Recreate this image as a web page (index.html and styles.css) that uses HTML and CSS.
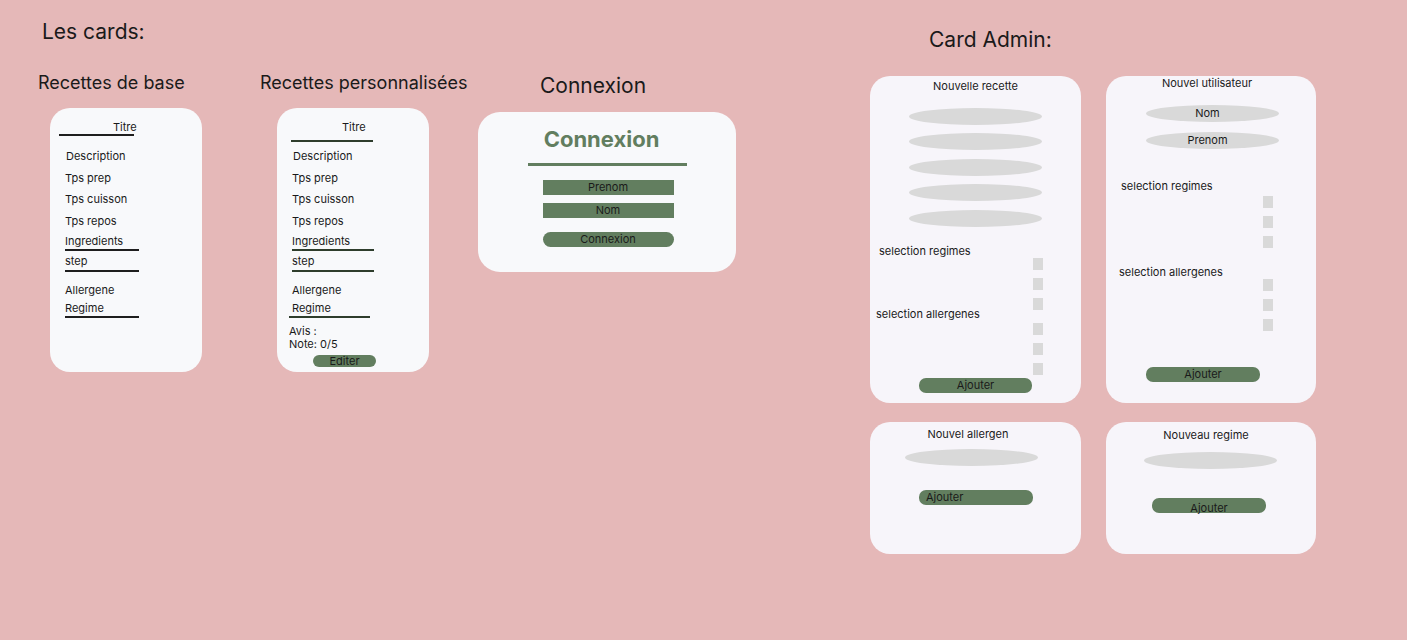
FILE: index.html
```html
<!DOCTYPE html>
<html lang="fr">

<head>
    <meta charset="UTF-8">
    <title>Les cards</title>
    <link rel="stylesheet" href="styles.css">
</head>

<body>

    <div class="board">

        <h1 class="board-title">Les cards:</h1>

        <!-- Recettes de base -->
        <section class="frame frame-base">
            <h2 class="frame-title">Recettes de base</h2>
            <div class="card recipe">
                <p class="titre">Titre</p>
                <div class="rule rule-titre"></div>
                <p class="field first">Description</p>
                <p class="field">Tps prep</p>
                <p class="field small">Tps cuisson</p>
                <p class="field">Tps repos</p>
                <p class="field ingr">Ingredients</p>
                <div class="rule"></div>
                <p class="field step">step</p>
                <div class="rule rule-step"></div>
                <p class="field allerg">Allergene</p>
                <p class="field regime">Regime</p>
                <div class="rule"></div>
            </div>
        </section>

        <!-- Recettes personnalisées -->
        <section class="frame frame-perso">
            <h2 class="frame-title">Recettes personnalisées</h2>
            <div class="card recipe perso">
                <p class="titre">Titre</p>
                <div class="rule rule-titre"></div>
                <p class="field first">Description</p>
                <p class="field">Tps prep</p>
                <p class="field small">Tps cuisson</p>
                <p class="field">Tps repos</p>
                <p class="field ingr">Ingredients</p>
                <div class="rule"></div>
                <p class="field step">step</p>
                <div class="rule rule-step"></div>
                <p class="field allerg">Allergene</p>
                <p class="field regime">Regime</p>
                <div class="rule rule-regime"></div>
                <p class="avis">Avis :</p>
                <p class="note">Note: 0/5</p>
                <div class="btn btn-editer">Editer</div>
            </div>
        </section>

        <!-- Connexion -->
        <section class="frame frame-login">
            <h2 class="frame-title big login-heading">Connexion</h2>
            <div class="card login">
                <h3 class="login-title">Connexion</h3>
                <div class="login-rule"></div>
                <div class="login-input first">Prenom</div>
                <div class="login-input">Nom</div>
                <div class="btn btn-login">Connexion</div>
            </div>
        </section>

        <!-- Card Admin -->
        <section class="frame frame-admin">
            <h2 class="frame-title big admin-title">Card Admin:</h2>
            <div class="admin-grid">

                <div class="card admin new-recipe">
                    <p class="admin-name">Nouvelle recette</p>
                    <div class="pills">
                        <div class="pill"></div>
                        <div class="pill"></div>
                        <div class="pill"></div>
                        <div class="pill"></div>
                        <div class="pill"></div>
                    </div>
                    <div class="selection">
                        <div class="labels">
                            <p class="label l-regimes">selection regimes</p>
                            <p class="label l-allergenes">selection allergenes</p>
                        </div>
                        <div class="checks">
                            <div class="sq"></div>
                            <div class="sq"></div>
                            <div class="sq"></div>
                            <div class="sq apart"></div>
                            <div class="sq"></div>
                            <div class="sq"></div>
                        </div>
                    </div>
                    <div class="btn btn-add">Ajouter</div>
                </div>

                <div class="card admin new-user">
                    <p class="admin-name">Nouvel utilisateur</p>
                    <div class="pills">
                        <div class="pill">Nom</div>
                        <div class="pill">Prenom</div>
                    </div>
                    <div class="selection">
                        <div class="labels">
                            <p class="label l-regimes">selection regimes</p>
                            <p class="label l-allergenes">selection allergenes</p>
                        </div>
                        <div class="checks">
                            <div class="sq"></div>
                            <div class="sq"></div>
                            <div class="sq"></div>
                            <div class="sq apart"></div>
                            <div class="sq"></div>
                            <div class="sq"></div>
                        </div>
                    </div>
                    <div class="btn btn-add">Ajouter</div>
                </div>

                <div class="card admin new-allergen">
                    <p class="admin-name">Nouvel allergen</p>
                    <div class="pills">
                        <div class="pill"></div>
                    </div>
                    <div class="btn btn-add">Ajouter</div>
                </div>

                <div class="card admin new-regime">
                    <p class="admin-name">Nouveau regime</p>
                    <div class="pills">
                        <div class="pill"></div>
                    </div>
                    <div class="btn btn-add">Ajouter</div>
                </div>

            </div>
        </section>

    </div>

</body>

</html>
```

FILE: styles.css
```css
body {
    margin: 0;
    background: #e5b8b8;
    color: #1a1a1a;
    font-family: Inter, "Noto Sans", sans-serif;
}

p,
h1,
h2,
h3 {
    margin: 0;
    font-weight: 400;
}

/* the whole page is a design board, frames sit where they were drawn */
.board {
    position: relative;
    width: 1407px;
    height: 640px;
    overflow: hidden;
}

.board-title {
    position: absolute;
    left: 42px;
    top: 19px;
    font-size: 21px;
    line-height: 26px;
}

.frame {
    position: absolute;
}

.frame-title {
    font-size: 18px;
    line-height: 20px;
    white-space: nowrap;
}

.frame-title.big {
    font-size: 21px;
    line-height: 24px;
}

.frame-base {
    left: 38px;
    top: 73px;
}

.frame-perso {
    left: 260px;
    top: 73px;
}

.frame-login {
    left: 478px;
    top: 74px;
}

.frame-admin {
    left: 870px;
    top: 28px;
}

.card {
    box-sizing: border-box;
    background: #f8f9fb;
    border-radius: 20px;
}

/* recipe cards */
.recipe {
    width: 152px;
    height: 264px;
    margin: 15px 0 0 12px;
    padding: 12px 0 0 15px;
}

.perso {
    margin-left: 17px;
}

.recipe p {
    font-size: 11px;
    line-height: 14px;
}

.recipe .titre {
    padding-left: 48px;
}

.perso .titre {
    padding-left: 50px;
}

.rule {
    width: 74px;
    height: 2px;
    margin-top: 1px;
    background: #1e1e1e;
}

.recipe .rule-titre {
    width: 75px;
    margin: 0 0 0 -6px;
}

.recipe .rule-step {
    margin-top: 2px;
}

.field {
    margin-top: 8px;
}

.field.first {
    margin-top: 13px;
    padding-left: 1px;
}

.field.small {
    margin-top: 7px;
}

.field.ingr {
    margin-top: 6px;
}

.field.step {
    margin-top: 3px;
}

.field.allerg {
    margin-top: 11px;
}

.field.regime {
    margin-top: 4px;
}

.perso .rule {
    width: 82px;
    background: #2e3d2c;
}

.perso .rule-titre {
    width: 82px;
    margin: 6px 0 0 -1px;
}

.perso .field.first {
    margin-top: 7px;
}

.perso .rule-regime {
    width: 81px;
    margin-left: -3px;
}

.recipe .avis {
    margin: 7px 0 0 -3px;
    line-height: 13px;
}

.recipe .note {
    margin-left: -3px;
    line-height: 13px;
}

.btn {
    box-sizing: border-box;
    background: #627e5f;
    color: #1a1a1a;
    font-size: 11px;
    text-align: center;
    border-radius: 6px;
}

.btn-editer {
    width: 63px;
    height: 12px;
    margin: 4px 0 0 21px;
    line-height: 12px;
}

/* connexion card */
.login-heading {
    padding-left: 62px;
}

.login {
    width: 258px;
    height: 160px;
    margin-top: 14px;
    border-radius: 22px;
    padding-top: 14px;
    display: flex;
    flex-direction: column;
    align-items: center;
}

.login-title {
    margin-right: 11px;
    font-size: 22px;
    line-height: 26px;
    font-weight: 700;
    color: #627e5f;
}

.login-rule {
    width: 159px;
    height: 3px;
    margin-top: 11px;
    background: #627e5f;
}

.login-input {
    width: 131px;
    height: 15px;
    margin: 8px 0 0 2px;
    background: #627e5f;
    font-size: 11px;
    line-height: 15px;
    text-align: center;
}

.login-input.first {
    margin-top: 14px;
}

.btn-login {
    width: 131px;
    height: 15px;
    margin: 14px 0 0 2px;
    line-height: 15px;
    border-radius: 8px;
}

/* admin cards */
.admin-title {
    padding-left: 59px;
}

.admin-grid {
    display: grid;
    grid-template-columns: 211px 210px;
    grid-template-rows: 327px 132px;
    column-gap: 25px;
    row-gap: 19px;
    margin-top: 24px;
}

.admin {
    background: #f7f5fa;
    display: flex;
    flex-direction: column;
}

.admin p {
    font-size: 11px;
    line-height: 14px;
}

.admin-name {
    text-align: center;
}

.pills {
    display: flex;
    flex-direction: column;
    gap: 8.5px;
}

.pill {
    width: 133px;
    height: 17px;
    border-radius: 50%;
    background: #d9d9d9;
    font-size: 11px;
    line-height: 17px;
    text-align: center;
}

.selection {
    display: flex;
    justify-content: space-between;
}

.sq {
    width: 10px;
    height: 12px;
    margin-top: 8px;
    background: #d9d9d9;
}

.btn-add {
    width: 113px;
    height: 15px;
    line-height: 15px;
    border-radius: 7px;
    font-size: 11px;
}

.new-recipe {
    padding-top: 3px;
}

.new-recipe .pills {
    margin: 14.5px 0 0 39px;
}

.new-recipe .labels {
    padding-left: 6px;
}

.new-recipe .l-regimes {
    margin: 17.5px 0 0 3px;
}

.new-recipe .l-allergenes {
    margin-top: 49px;
}

.new-recipe .checks {
    margin-right: 38px;
}

.new-recipe .sq:first-child {
    margin-top: 31.5px;
}

.new-recipe .sq.apart {
    margin-top: 13px;
}

.new-recipe .btn-add {
    margin: auto 0 10px 49px;
}

.new-user {
    padding-top: 0;
}

.new-user .admin-name {
    padding-right: 8px;
}

.new-user .pills {
    margin: 14.5px 0 0 40px;
    gap: 10px;
}

.new-user .pill {
    padding-right: 10px;
    box-sizing: border-box;
}

.new-user .labels {
    padding-left: 13px;
}

.new-user .l-regimes {
    margin: 30.5px 0 0 2px;
}

.new-user .l-allergenes {
    margin-top: 72px;
}

.new-user .checks {
    margin-right: 43px;
}

.new-user .sq:first-child {
    margin-top: 47.5px;
}

.new-user .sq.apart {
    margin-top: 31px;
}

.new-user .btn-add {
    width: 114px;
    margin: auto 0 21px 40px;
}

.new-allergen {
    padding-top: 5px;
}

.new-allergen .admin-name {
    padding-right: 15px;
}

.new-allergen .pills {
    margin: 7.5px 0 0 35px;
}

.new-allergen .btn-add {
    width: 114px;
    margin: 24.5px 0 0 49px;
    padding-left: 7px;
    text-align: left;
}

.new-regime {
    padding-top: 6px;
}

.new-regime .admin-name {
    padding-right: 10px;
}

.new-regime .pills {
    margin: 9.5px 0 0 38px;
}

.new-regime .btn-add {
    width: 114px;
    margin: 29.5px 0 0 46px;
    padding-top: 3px;
}
```
